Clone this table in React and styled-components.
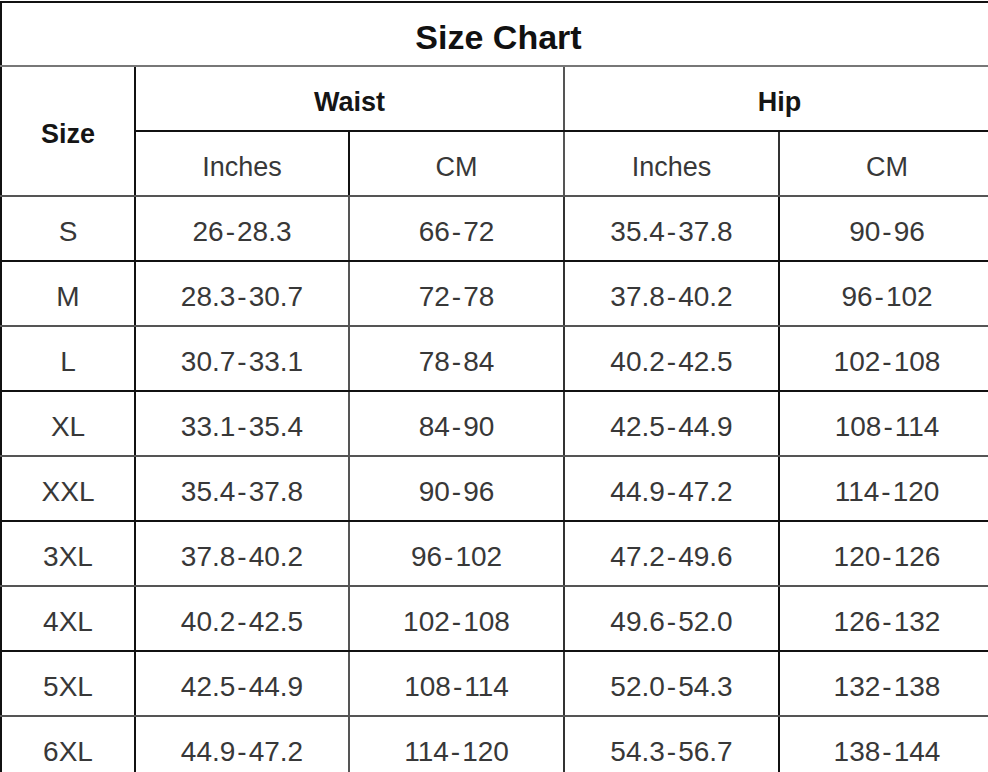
import React from 'react';
import styled, { createGlobalStyle } from 'styled-components';

const GlobalStyle = createGlobalStyle`
  html, body {
    margin: 0;
    padding: 0;
    background: #ffffff;
    overflow: hidden;
  }
  body {
    font-family: "Liberation Sans", Arial, sans-serif;
  }
`;

const Page = styled.div`
  width: 988px;
  height: 772px;
  overflow: hidden;
  padding-top: 1px;
  box-sizing: border-box;
`;

const Table = styled.table`
  border-collapse: collapse;
  table-layout: fixed;
  width: 994px;
  border-top: 2px solid #111;
  border-left: 2px solid #111;
  color: #2b2b2b;
`;

const Row = styled.tr`
  height: ${({ $h }) => $h || 65}px;
`;

const Cell = styled.td`
  padding: 7px 0 0;
  text-align: center;
  vertical-align: middle;
  font-size: ${({ $head }) => ($head ? 27 : 28)}px;
  font-weight: ${({ $bold }) => ($bold ? 700 : 400)};
  color: ${({ $bold }) => ($bold ? '#151515' : '#383838')};
  border-bottom: 2px solid ${({ $line }) => $line || '#111'};
  border-right: 2px solid ${({ $vline }) => $vline || '#111'};
  white-space: nowrap;
`;

const Title = styled(Cell)`
  font-size: 34px;
  font-weight: 700;
  color: #111;
  border-right: none;
`;

const Dash = styled.span`
  margin: 0 2px;
`;

const rows = [
  ['S', '26-28.3', '66-72', '35.4-37.8', '90-96'],
  ['M', '28.3-30.7', '72-78', '37.8-40.2', '96-102'],
  ['L', '30.7-33.1', '78-84', '40.2-42.5', '102-108'],
  ['XL', '33.1-35.4', '84-90', '42.5-44.9', '108-114'],
  ['XXL', '35.4-37.8', '90-96', '44.9-47.2', '114-120'],
  ['3XL', '37.8-40.2', '96-102', '47.2-49.6', '120-126'],
  ['4XL', '40.2-42.5', '102-108', '49.6-52.0', '126-132'],
  ['5XL', '42.5-44.9', '108-114', '52.0-54.3', '132-138'],
  ['6XL', '44.9-47.2', '114-120', '54.3-56.7', '138-144'],
];

const vlines = ['#111', '#111', '#555', '#333', '#111'];

const Range = ({ value }) => {
  const [a, b] = value.split('-');
  if (b === undefined) return value;
  return (
    <>
      {a}
      <Dash>-</Dash>
      {b}
    </>
  );
};

export default function App() {
  return (
    <Page>
      <GlobalStyle />
      <Table>
        <colgroup>
          <col style={{ width: 134 }} />
          <col style={{ width: 214 }} />
          <col style={{ width: 215 }} />
          <col style={{ width: 215 }} />
          <col style={{ width: 216 }} />
        </colgroup>
        <tbody>
          <Row $h={64}>
            <Title colSpan={5} $line="#777">Size Chart</Title>
          </Row>
          <Row>
            <Cell rowSpan={2} $bold $head $line="#555">Size</Cell>
            <Cell colSpan={2} $bold $head $vline="#555">Waist</Cell>
            <Cell colSpan={2} $bold $head>Hip</Cell>
          </Row>
          <Row>
            <Cell $head $line="#555">Inches</Cell>
            <Cell $head $line="#555" $vline="#555">CM</Cell>
            <Cell $head $line="#555" $vline="#333">Inches</Cell>
            <Cell $head $line="#555">CM</Cell>
          </Row>
          {rows.map((r, i) => (
            <Row key={r[0]}>
              {r.map((v, j) => (
                <Cell key={j} $line={i % 2 === 0 ? '#111' : '#555'} $vline={vlines[j + 1] || '#111'}>
                  <Range value={v} />
                </Cell>
              ))}
            </Row>
          ))}
        </tbody>
      </Table>
    </Page>
  );
}
